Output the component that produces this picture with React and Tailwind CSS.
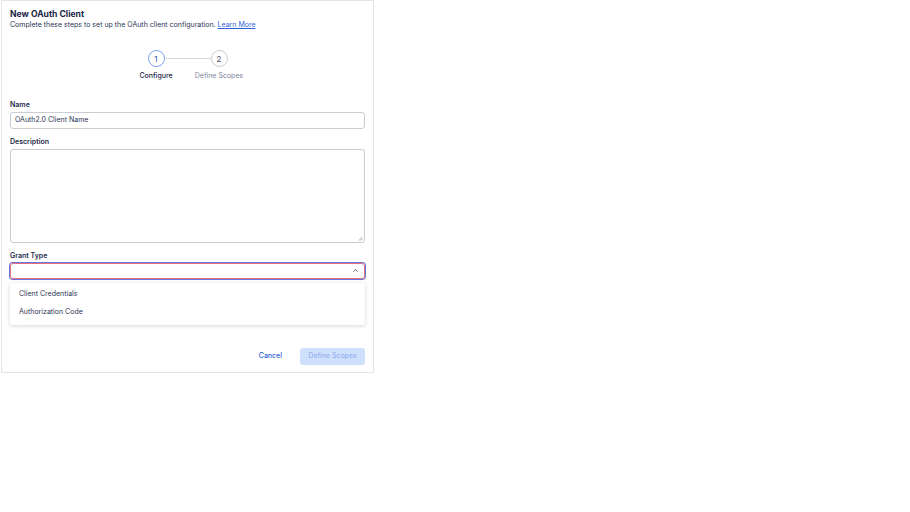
import { ChevronUp } from 'lucide-react';

const App = () => {
  return (
    <div className="min-h-screen bg-white" style={{ fontFamily: 'Inter, "Noto Sans", sans-serif' }}>
      <div className="ml-px w-[373px] h-[373px] border border-[#e3e5ea] bg-white px-[8px] pt-[8px] text-[#1c2848]">
        <h1 className="text-[8.6px] leading-[11px] font-bold text-[#1a2446]">New OAuth Client</h1>
        <p className="text-[7px] leading-[9px] text-[#2b3553]">
          Complete these steps to set up the OAuth client configuration.{' '}
          <a href="#" className="text-[#2f5fd8] underline">Learn More</a>
        </p>

        <div className="mt-[21px] flex justify-center">
          <div className="flex flex-col items-center w-[56px]">
            <div className="w-[17px] h-[17px] rounded-full border border-[#7b9cf0] flex items-center justify-center text-[8px] text-[#2b4fb8]">1</div>
            <span className="mt-[4px] text-[7px] leading-[9px] font-medium text-[#1f2a48] whitespace-nowrap">Configure</span>
          </div>
          <div className="w-[46px] h-px bg-[#d4d7de] mt-[8px] -mx-[19.5px]"></div>
          <div className="flex flex-col items-center w-[56px]">
            <div className="w-[17px] h-[17px] rounded-full border border-[#c9ccd3] flex items-center justify-center text-[8px] text-[#4a5068]">2</div>
            <span className="mt-[4px] text-[7px] leading-[9px] text-[#7d8396] whitespace-nowrap">Define Scopes</span>
          </div>
        </div>

        <div className="mt-[20px]">
          <label className="block text-[7px] leading-[9px] font-semibold text-[#1f2a48]">Name</label>
          <div className="mt-[2.5px] h-[17px] border border-[#c9ccd3] rounded-[3px] px-[4px] flex items-center text-[7px] text-[#2b3553]">
            OAuth2.0 Client Name
          </div>
        </div>

        <div className="mt-[8.5px]">
          <label className="block text-[7px] leading-[9px] font-semibold text-[#1f2a48]">Description</label>
          <div className="relative mt-[2.5px] h-[94px] border border-[#c9ccd3] rounded-[3px]">
            <svg className="absolute right-[1px] bottom-[1px]" width="5" height="5" viewBox="0 0 6 6">
              <path d="M5.5 1 L1 5.5 M5.5 3.5 L3.5 5.5" stroke="#8a8f9c" strokeWidth="0.9" />
            </svg>
          </div>
        </div>

        <div className="mt-[8.5px] relative">
          <label className="block text-[7px] leading-[9px] font-semibold text-[#1f2a48]">Grant Type</label>
          <div className="mt-[2.5px] h-[16px] border border-[#e0707e] rounded-[3px] ring-1 ring-[#6d74d9] flex items-center justify-end pr-[5px]">
            <ChevronUp size={7} strokeWidth={2.6} color="#2b3553" />
          </div>
          <div className="absolute left-0 right-0 top-[31.5px] bg-white rounded-[3px] shadow-[0_1px_4px_rgba(20,30,60,0.18)] py-[3px] z-10">
            <div className="px-[9px] h-[18px] flex items-center text-[7px] text-[#2b3553]">Client Credentials</div>
            <div className="px-[9px] h-[18px] flex items-center text-[7px] text-[#2b3553]">Authorization Code</div>
          </div>
        </div>

        <div className="mt-[69px] flex justify-end items-center gap-[18px]">
          <button className="text-[7px] text-[#2f5fd8] font-medium">Cancel</button>
          <button className="h-[17px] w-[65px] rounded-[3px] bg-[#cfe0fd] text-[7px] text-[#8aa8ec]">Define Scopes</button>
        </div>
      </div>
    </div>
  );
};

export default App;
